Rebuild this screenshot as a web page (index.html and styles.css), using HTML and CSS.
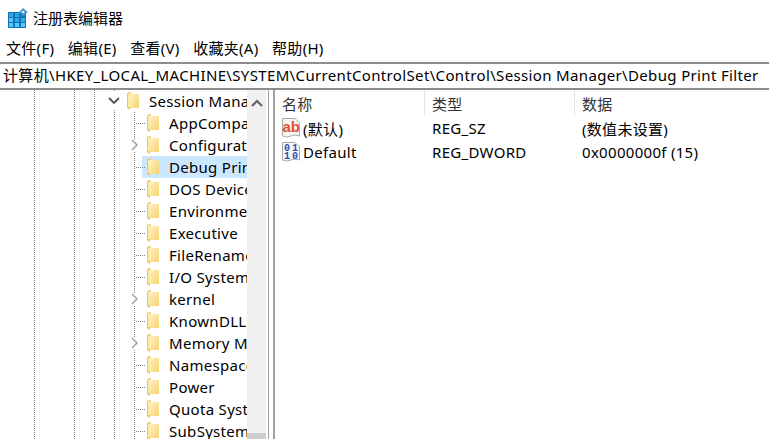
FILE: index.html
```html
<!DOCTYPE html>
<html lang="zh-CN">
<head>
  <meta charset="UTF-8" />
  <title>注册表编辑器</title>
  <link rel="stylesheet" href="styles.css">
</head>
<body>
  <svg class="defs" width="0" height="0">
    <defs>
      <linearGradient id="folderFill" x1="0" y1="0" x2="1" y2="1">
        <stop offset="0" stop-color="#fdf2c0" />
        <stop offset="1" stop-color="#f6d272" />
      </linearGradient>
      <symbol id="folder" viewBox="0 0 12 18">
        <path d="M0 1 L3 0 L4 1 L4 2 L12 2 L12 16 L3 16 L3 18 L0 16 Z" fill="#e9c468" />
        <path d="M3 2 L12 2 L12 16 L3 16 Z" fill="url(#folderFill)" />
        <path d="M1 2 L3 1 L3 15 L1 15 Z" fill="#fbe9a6" />
      </symbol>
    </defs>
  </svg>

  <div class="title-bar">
    <svg class="app-icon" width="20" height="20" viewBox="0 0 20 20">
      <rect x="0" y="4" width="18" height="16" fill="#0f75b8" />
      <rect x="1" y="5" width="4" height="4" fill="#2fa6e6" />
      <rect x="7" y="5" width="4" height="4" fill="#2fa6e6" />
      <rect x="1" y="10" width="4" height="4" fill="#5cc6f5" />
      <rect x="7" y="10" width="4" height="4" fill="#2fa6e6" />
      <rect x="13" y="10" width="4" height="4" fill="#2fa6e6" />
      <rect x="1" y="15" width="4" height="4" fill="#5cc6f5" />
      <rect x="7" y="15" width="4" height="4" fill="#5cc6f5" />
      <rect x="13" y="15" width="4" height="4" fill="#5cc6f5" />
      <path d="M15 0 L20 4 L15 8 L11 4 Z" fill="#4d9fd0" />
      <rect x="14" y="3" width="2" height="2" fill="#d6effb" />
    </svg>
    <span>注册表编辑器</span>
  </div>

  <nav class="menu-bar">
    <span>文件(F)</span>
    <span>编辑(E)</span>
    <span>查看(V)</span>
    <span>收藏夹(A)</span>
    <span>帮助(H)</span>
  </nav>

  <div class="address-bar">计算机\HKEY_LOCAL_MACHINE\SYSTEM\CurrentControlSet\Control\Session Manager\Debug Print Filter</div>

  <main class="panes">
    <section class="tree-pane">
      <div class="tree">
        <div class="row row-parent">
          <svg class="chevron" width="12" height="18" viewBox="0 0 12 18"><path d="M1 6 L6 11 L11 6" fill="none" stroke="#555" stroke-width="1.8" /></svg>
          <svg class="folder" width="12" height="18"><use href="#folder" /></svg>
          <span class="label">Session Manager</span>
        </div>
        <div class="children">
          <div class="row"><svg class="folder" width="12" height="18"><use href="#folder" /></svg><span class="label">AppCompatCache</span></div>
          <div class="row has-kids">
            <svg class="chevron-right" width="8" height="12" viewBox="0 0 8 12"><path d="M1 1 L6 6 L1 11" fill="none" stroke="#a6a6a6" stroke-width="1.6" /></svg>
            <svg class="folder" width="12" height="18"><use href="#folder" /></svg><span class="label">Configuration</span>
          </div>
          <div class="row selected"><svg class="folder" width="12" height="18"><use href="#folder" /></svg><span class="label">Debug Print Filter</span></div>
          <div class="row"><svg class="folder" width="12" height="18"><use href="#folder" /></svg><span class="label">DOS Devices</span></div>
          <div class="row"><svg class="folder" width="12" height="18"><use href="#folder" /></svg><span class="label">Environment</span></div>
          <div class="row"><svg class="folder" width="12" height="18"><use href="#folder" /></svg><span class="label">Executive</span></div>
          <div class="row"><svg class="folder" width="12" height="18"><use href="#folder" /></svg><span class="label">FileRename</span></div>
          <div class="row"><svg class="folder" width="12" height="18"><use href="#folder" /></svg><span class="label">I/O System</span></div>
          <div class="row has-kids">
            <svg class="chevron-right" width="8" height="12" viewBox="0 0 8 12"><path d="M1 1 L6 6 L1 11" fill="none" stroke="#a6a6a6" stroke-width="1.6" /></svg>
            <svg class="folder" width="12" height="18"><use href="#folder" /></svg><span class="label">kernel</span>
          </div>
          <div class="row"><svg class="folder" width="12" height="18"><use href="#folder" /></svg><span class="label">KnownDLLs</span></div>
          <div class="row has-kids">
            <svg class="chevron-right" width="8" height="12" viewBox="0 0 8 12"><path d="M1 1 L6 6 L1 11" fill="none" stroke="#a6a6a6" stroke-width="1.6" /></svg>
            <svg class="folder" width="12" height="18"><use href="#folder" /></svg><span class="label">Memory Manager</span>
          </div>
          <div class="row"><svg class="folder" width="12" height="18"><use href="#folder" /></svg><span class="label">Namespace</span></div>
          <div class="row"><svg class="folder" width="12" height="18"><use href="#folder" /></svg><span class="label">Power</span></div>
          <div class="row"><svg class="folder" width="12" height="18"><use href="#folder" /></svg><span class="label">Quota System</span></div>
          <div class="row"><svg class="folder" width="12" height="18"><use href="#folder" /></svg><span class="label">SubSystems</span></div>
        </div>
      </div>
      <div class="scrollbar">
        <svg class="scroll-arrow" width="12" height="8" viewBox="0 0 12 8"><path d="M1 7 L6 2 L11 7" fill="none" stroke="#606060" stroke-width="2" /></svg>
        <div class="scroll-thumb"></div>
      </div>
    </section>

    <div class="splitter"></div>

    <section class="list-pane">
      <div class="list-row list-head">
        <div class="col-name">名称</div>
        <div class="col-type">类型</div>
        <div class="col-data">数据</div>
      </div>
      <div class="list-row">
        <div class="col-name">
          <svg class="value-icon" width="18" height="20" viewBox="0 0 18 20">
            <path d="M0.5 0.5 H13 L17.5 5 V18 Q13 16 9 18 T0.5 18 Z" fill="#f6f6f6" stroke="#a8a8a8" />
            <text class="ab-text" x="0.5" y="14">ab</text>
          </svg>
          <span>(默认)</span>
        </div>
        <div class="col-type">REG_SZ</div>
        <div class="col-data">(数值未设置)</div>
      </div>
      <div class="list-row">
        <div class="col-name">
          <svg class="value-icon" width="18" height="20" viewBox="0 0 18 20">
            <path d="M0.5 0.5 H13 L17.5 5 V18 Q13 16 9 18 T0.5 18 Z" fill="#f6f6f6" stroke="#a8a8a8" />
            <text class="bin-text" x="2" y="8.5">01</text>
            <text class="bin-text" x="2" y="16.5">10</text>
          </svg>
          <span>Default</span>
        </div>
        <div class="col-type">REG_DWORD</div>
        <div class="col-data">0x0000000f (15)</div>
      </div>
    </section>
  </main>
</body>
</html>
```

FILE: styles.css
```css
html, body {
  margin: 0;
  height: 100%;
}
body {
  width: 769px;
  height: 439px;
  overflow: hidden;
  background: #fff;
  color: #000;
  font-family: "Noto Sans", "Noto Sans CJK SC", sans-serif;
  font-size: 15px;
  letter-spacing: 0.3px;
  display: flex;
  flex-direction: column;
}
.defs {
  position: absolute;
}
.title-bar {
  height: 35px;
  flex: none;
  display: flex;
  align-items: center;
  gap: 5px;
  padding-left: 8px;
  letter-spacing: 0;
}
.menu-bar {
  height: 24px;
  flex: none;
  margin-bottom: 3px;
  display: flex;
  align-items: center;
  gap: 13.5px;
  padding-left: 6px;
}
.address-bar {
  height: 24px;
  flex: none;
  line-height: 23px;
  padding-left: 3px;
  white-space: nowrap;
  letter-spacing: 0.35px;
  border-top: 2px solid #8c8c8c;
  border-bottom: 2px solid #8c8c8c;
}
.panes {
  flex: 1;
  min-height: 0;
  display: flex;
}
.tree-pane {
  width: 266px;
  flex: none;
  display: flex;
  overflow: hidden;
}
.tree {
  width: 247px;
  flex: none;
  overflow: hidden;
  background-image:
    repeating-linear-gradient(to bottom, #808080 0 1px, transparent 1px 2px),
    repeating-linear-gradient(to bottom, #808080 0 1px, transparent 1px 2px),
    repeating-linear-gradient(to bottom, #808080 0 1px, transparent 1px 2px),
    repeating-linear-gradient(to bottom, #808080 0 1px, transparent 1px 2px);
  background-size: 1px 100%;
  background-repeat: no-repeat;
  background-position: 34px 0, 74px 0, 94px 0, 114px 0;
}
.row {
  height: 22px;
  display: flex;
  align-items: center;
  position: relative;
  white-space: nowrap;
}
.row-parent {
  padding-left: 127px;
}
.chevron {
  position: absolute;
  left: 108px;
  top: 2px;
  background: #fff;
}
.children {
  background-image: repeating-linear-gradient(to bottom, #808080 0 1px, transparent 1px 2px);
  background-size: 1px 100%;
  background-repeat: no-repeat;
  background-position: 134px 0;
}
.children .row {
  padding-left: 147px;
}
.children .row::before {
  content: "";
  position: absolute;
  left: 136px;
  top: 11px;
  width: 9px;
  border-top: 1px dotted #808080;
}
.children .has-kids::before {
  display: none;
}
.chevron-right {
  position: absolute;
  left: 131px;
  top: 5px;
  background: #fff;
}
.selected {
  background: linear-gradient(to right, transparent 142px, #cce8ff 142px);
}
.folder {
  flex: none;
}
.label {
  margin-left: 10px;
}
.scrollbar {
  width: 19px;
  flex: none;
  background: #f0f0f0;
  display: flex;
  flex-direction: column;
  align-items: center;
  justify-content: space-between;
  padding-top: 9px;
}
.scroll-arrow {
  flex: none;
}
.scroll-thumb {
  width: 100%;
  height: 6px;
  flex: none;
  background: #cdcdcd;
}
.splitter {
  width: 7px;
  flex: none;
  box-sizing: border-box;
  margin-left: 2px;
  border-left: 1px solid #a0a0a0;
  border-right: 2px solid #a0a0a0;
}
.list-pane {
  flex: 1;
  min-width: 0;
}
.list-row {
  height: 24px;
  display: flex;
  align-items: center;
}
.list-head {
  height: 26px;
  color: #333;
}
.list-row > div {
  box-sizing: border-box;
  height: 100%;
  display: flex;
  align-items: center;
  white-space: nowrap;
}
.col-name {
  width: 150px;
  padding-left: 7px;
  flex: none;
}
.col-type {
  width: 150px;
  padding-left: 7px;
  flex: none;
}
.col-data {
  padding-left: 7px;
  flex: 1;
}
.list-head .col-name,
.list-head .col-type {
  border-right: 1px solid #e5e5e5;
}
.value-icon {
  margin-right: 3px;
  flex: none;
}
.ab-text {
  font-family: "Liberation Sans", sans-serif;
  font-size: 15px;
  font-weight: 700;
  letter-spacing: 0;
  fill: #e0512f;
}
.bin-text {
  font-family: "Liberation Mono", monospace;
  font-size: 10px;
  font-weight: 700;
  letter-spacing: 2px;
  fill: #2a4fb4;
}
```
